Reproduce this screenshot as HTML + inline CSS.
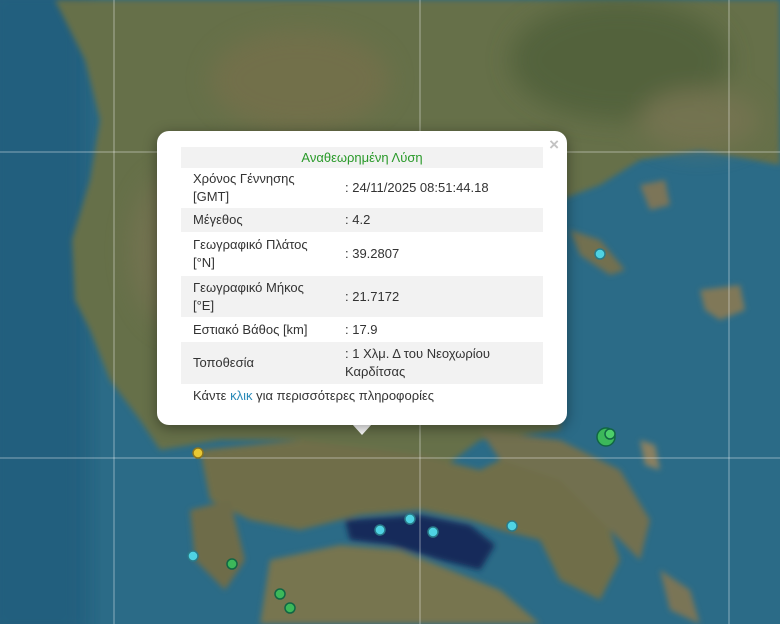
<!DOCTYPE html>
<html><head><meta charset="utf-8"><style>
html,body{margin:0;padding:0;width:780px;height:624px;overflow:hidden;background:#2a6a88}
#map{position:absolute;left:0;top:0}
.pop{position:absolute;left:157px;top:131px;width:410px;height:294px;background:#fff;border-radius:12px;box-shadow:0 3px 14px rgba(0,0,0,.4);font-family:"Liberation Sans",sans-serif;font-size:13px;color:#333}
.tip{position:absolute;left:352px;top:424px;width:0;height:0;border-left:10px solid transparent;border-right:10px solid transparent;border-top:11px solid #fff}
.x{position:absolute;right:8px;top:4px;color:#c3c3c3;font-size:17px;font-weight:bold}
table{position:absolute;left:24px;top:16px;width:362px;border-collapse:collapse}
td{padding:0 0 0 12px;line-height:18px;vertical-align:middle}
tr.g td{background:#f2f2f2}
td.l{width:148px}
td.v{padding-left:4px}
.h td{color:#2a9a2a;text-align:center;height:21px;padding:0}
.more{position:absolute;left:36px;top:257px}
.more span{color:#2a8ab8}
</style></head><body>
<svg id="map" width="780" height="624" viewBox="0 0 780 624">
<defs><filter id="b"><feGaussianBlur stdDeviation="3"/></filter><filter id="b2"><feGaussianBlur stdDeviation="12"/></filter></defs>
<rect width="780" height="624" fill="#2b6b87"/>
<rect x="-20" y="-20" width="110" height="664" fill="#245f7e" filter="url(#b2)"/>
<g filter="url(#b)">
<path d="M55 0 L780 0 L780 165 L700 150 L640 160 L600 185 L560 200 L560 430 L480 440 L440 470 L300 440 L220 440 L160 450 L140 420 L110 380 L90 330 L75 300 L72 240 L90 180 L100 120 L85 60 Z" fill="#66704a"/>
<path d="M200 450 L300 440 L420 455 L480 470 L520 450 L560 470 L600 500 L620 560 L600 600 L560 580 L540 540 L500 530 L470 520 L420 510 L360 515 L300 530 L250 520 L210 500 Z" fill="#6f6e4a"/>
<path d="M480 430 L560 440 L620 470 L650 520 L640 560 L600 520 L560 480 L500 460 Z" fill="#727050"/>
<path d="M270 560 L340 545 L400 550 L450 570 L500 590 L540 624 L260 624 Z" fill="#77744f"/>
<path d="M190 510 L230 500 L245 560 L225 590 L195 560 Z" fill="#6e6c4a"/>
<path d="M345 520 L420 515 L470 525 L495 545 L480 570 L440 560 L390 545 L350 540 Z" fill="#13295a"/>
<path d="M570 230 L600 240 L625 270 L610 275 L580 255 Z" fill="#727050"/>
<path d="M640 185 L665 180 L670 205 L650 210 Z" fill="#7b7458"/>
<path d="M700 290 L740 285 L745 310 L720 320 L705 310 Z" fill="#807858"/>
<path d="M640 440 L655 445 L660 470 L645 465 Z" fill="#8a8060"/>
<path d="M660 570 L690 590 L700 624 L670 610 Z" fill="#7a7556"/>
</g>
<g filter="url(#b2)" opacity=".6">
<ellipse cx="620" cy="60" rx="110" ry="60" fill="#465a34"/>
<ellipse cx="300" cy="80" rx="90" ry="50" fill="#7a6f4c"/>
<ellipse cx="180" cy="250" rx="50" ry="80" fill="#7c7454"/>
<ellipse cx="700" cy="120" rx="60" ry="30" fill="#7d7654"/>
</g>
<g stroke="rgba(255,255,255,.45)" stroke-width="1">
<line x1="114" y1="0" x2="114" y2="624"/><line x1="420" y1="0" x2="420" y2="624"/><line x1="729" y1="0" x2="729" y2="624"/>
<line x1="0" y1="152" x2="780" y2="152"/><line x1="0" y1="458" x2="780" y2="458"/>
</g>
<g stroke="#164" stroke-width="1.5">
<circle cx="600" cy="254" r="5" fill="#4fd3e3" stroke="#2a7a88"/>
<circle cx="380" cy="530" r="5" fill="#4fd3e3" stroke="#2a7a88"/>
<circle cx="410" cy="519" r="5" fill="#4fd3e3" stroke="#2a7a88"/>
<circle cx="433" cy="532" r="5" fill="#4fd3e3" stroke="#2a7a88"/>
<circle cx="512" cy="526" r="5" fill="#4fd3e3" stroke="#2a7a88"/>
<circle cx="193" cy="556" r="5" fill="#4fd3e3" stroke="#2a7a88"/>
<circle cx="606" cy="437" r="9" fill="#3cb85a"/>
<circle cx="610" cy="434" r="5" fill="#4ccf6a"/>
<circle cx="232" cy="564" r="5" fill="#3cb85a"/>
<circle cx="280" cy="594" r="5" fill="#3cb85a"/>
<circle cx="290" cy="608" r="5" fill="#3cb85a"/>
<circle cx="198" cy="453" r="5" fill="#e8c832" stroke="#8a7420"/>
</g>
</svg>
<div class="tip"></div>
<div class="pop"><div class="x">×</div>
<table>
<tr class="g h"><td colspan="2">Αναθεωρημένη Λύση</td></tr>
<tr><td class="l" style="height:40px">Χρόνος Γέννησης<br>[GMT]</td><td class="v">: 24/11/2025 08:51:44.18</td></tr>
<tr class="g"><td class="l" style="height:24px">Μέγεθος</td><td class="v">: 4.2</td></tr>
<tr><td class="l" style="height:44px">Γεωγραφικό Πλάτος<br>[°N]</td><td class="v">: 39.2807</td></tr>
<tr class="g"><td class="l" style="height:41px">Γεωγραφικό Μήκος<br>[°E]</td><td class="v">: 21.7172</td></tr>
<tr><td class="l" style="height:25px">Εστιακό Βάθος [km]</td><td class="v">: 17.9</td></tr>
<tr class="g"><td class="l" style="height:42px">Τοποθεσία</td><td class="v">: 1 Χλμ. Δ του Νεοχωρίου<br>Καρδίτσας</td></tr>
</table>
<div class="more">Κάντε <span>κλικ</span> για περισσότερες πληροφορίες</div>
</div>
</body></html>
